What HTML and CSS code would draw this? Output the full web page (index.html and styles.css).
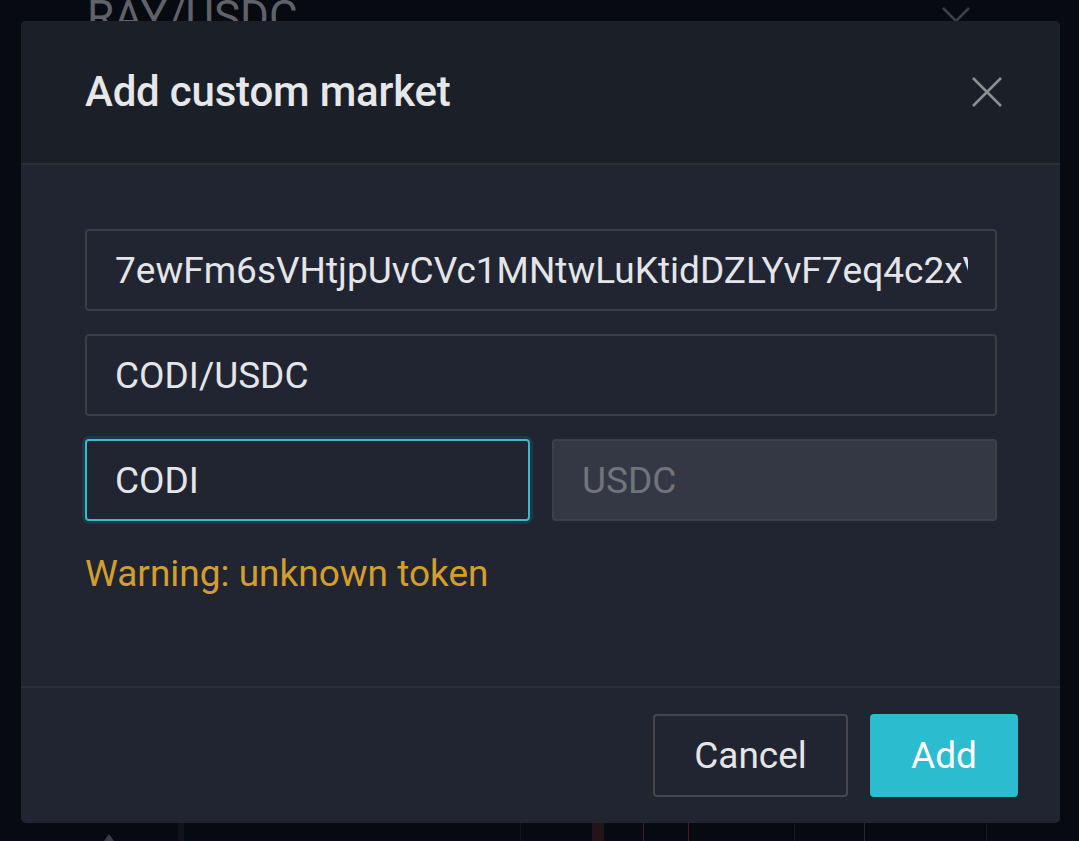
FILE: index.html
```html
<!DOCTYPE html>
<html lang="en">
<head>
<meta charset="utf-8">
<title>Add custom market</title>
<link rel="stylesheet" href="styles.css">
</head>
<body>
<div class="backdrop">
  <div class="bg-title">RAY/USDC</div>
  <svg class="bg-close" width="28" height="28" viewBox="0 0 28 28" aria-hidden="true">
    <path d="M1 1 L27 27 M27 1 L1 27" stroke="#3c3f46" stroke-width="2.5" fill="none"/>
  </svg>
  <div class="bg-chart">
    <span class="tick t1"></span>
    <span class="col c1"></span>
    <span class="line l1"></span>
    <span class="candle k1"></span>
    <span class="line red r1"></span>
    <span class="line red r2"></span>
    <span class="line l2"></span>
    <span class="line l3"></span>
    <span class="line l4"></span>
  </div>
</div>
<div class="modal">
  <div class="modal-header">
    <h2 class="modal-title">Add custom market</h2>
    <svg class="close-icon" width="32" height="32" viewBox="0 0 32 32" aria-label="close">
      <path d="M2 2 L30 30 M30 2 L2 30" stroke="#8b8e94" stroke-width="2.6" fill="none"/>
    </svg>
  </div>
  <div class="modal-body">
    <input class="field" type="text" value="7ewFm6sVHtjpUvCVc1MNtwLuKtidDZLYvF7eq4c2xVQk">
    <input class="field" type="text" value="CODI/USDC">
    <div class="field-row">
      <input class="field focused" type="text" value="CODI">
      <input class="field disabled" type="text" value="USDC" disabled>
    </div>
    <div class="warning">Warning: unknown token</div>
  </div>
  <div class="modal-footer">
    <button class="btn btn-cancel">Cancel</button>
    <button class="btn btn-add">Add</button>
  </div>
</div>
</body>
</html>
```
FILE: styles.css
```css
* { box-sizing: border-box; }
html, body {
  margin: 0;
  padding: 0;
  width: 1079px;
  height: 841px;
  overflow: hidden;
  background: #080a12;
  font-family: Roboto, "Noto Sans", sans-serif;
}
body { position: relative; }

.backdrop {
  position: absolute;
  inset: 0;
}
.bg-title {
  position: absolute;
  left: 87px;
  top: -9px;
  font-size: 44px;
  line-height: 52px;
  color: #5f6268;
  white-space: nowrap;
}
.bg-close {
  position: absolute;
  left: 942px;
  top: 7px;
}
.bg-chart {
  position: absolute;
  left: 0;
  right: 0;
  top: 823px;
  height: 18px;
}
.bg-chart span { position: absolute; top: 0; bottom: 0; }
.bg-chart .t1 {
  left: 102px; top: 11px; width: 14px; height: 10px;
  background: #3b3d42;
  clip-path: polygon(50% 0, 100% 100%, 0 100%);
}
.bg-chart .c1 { left: 178px; width: 6px; background: #121318; }
.bg-chart .line { width: 1px; background: #15171c; }
.bg-chart .l1 { left: 520px; }
.bg-chart .k1 { left: 592px; width: 12px; background: #241419; }
.bg-chart .red { background: #4a1a26; }
.bg-chart .r1 { left: 643px; }
.bg-chart .r2 { left: 688px; }
.bg-chart .l2 { left: 794px; }
.bg-chart .l3 { left: 864px; background: #25272c; }
.bg-chart .l4 { left: 986px; }

.modal {
  position: absolute;
  left: 21px;
  top: 21px;
  width: 1039px;
  height: 802px;
  border-radius: 5px;
  overflow: hidden;
  background: #212532;
  display: flex;
  flex-direction: column;
}
.modal-header {
  height: 144px;
  background: #1b1f28;
  border-bottom: 2px solid #2c2f36;
  display: flex;
  align-items: center;
  justify-content: space-between;
  padding: 0 57px 0 64px;
  flex-shrink: 0;
}
.modal-title {
  margin: 0;
  font-size: 42px;
  line-height: 50px;
  font-weight: 500;
  color: #e6e7ea;
  letter-spacing: -0.2px;
}
.close-icon { display: block; margin-top: 0; }

.modal-body {
  flex: 1;
  padding: 64px 63px 0 64px;
  display: flex;
  flex-direction: column;
  gap: 23px;
  border-bottom: 2px solid #2c2f36;
}
.field {
  display: block;
  width: 100%;
  height: 82px;
  margin: 0;
  padding: 0 27px 0 28px;
  background: #212532;
  border: 2px solid #3b3e45;
  border-radius: 4px;
  color: #e4e5e8;
  font-family: Roboto, "Noto Sans", sans-serif;
  font-size: 37px;
  outline: none;
}
.field-row {
  display: flex;
  gap: 22px;
}
.field-row .field { flex: 1; width: auto; min-width: 0; }
.field.focused {
  border-color: #3cb8cb;
  box-shadow: 0 0 0 3px #1b3947;
}
.field.disabled {
  background: #333844;
  border-color: #3d4048;
  color: #6f747d;
}
.warning {
  margin-top: 8px;
  font-size: 37px;
  line-height: 44px;
  color: #d49e2c;
}

.modal-footer {
  height: 135px;
  flex-shrink: 0;
  display: flex;
  justify-content: flex-end;
  align-items: center;
  gap: 22px;
  padding: 0 42px 0 0;
}
.btn {
  height: 83px;
  border-radius: 4px;
  font-family: Roboto, "Noto Sans", sans-serif;
  font-size: 37px;
  cursor: pointer;
}
.btn-cancel {
  width: 195px;
  background: #212532;
  border: 2px solid #45474d;
  color: #e4e5e8;
}
.btn-add {
  width: 148px;
  background: #2bbcd0;
  border: none;
  color: #ffffff;
}
```
